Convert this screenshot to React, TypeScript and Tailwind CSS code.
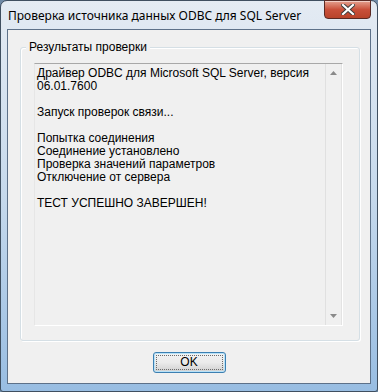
import React from 'react'

const lines = [
  'Драйвер ODBC для Microsoft SQL Server, версия',
  '06.01.7600',
  '',
  'Запуск проверок связи...',
  '',
  'Попытка соединения',
  'Соединение установлено',
  'Проверка значений параметров',
  'Отключение от сервера',
  '',
  'ТЕСТ УСПЕШНО ЗАВЕРШЕН!',
]

function CloseButton() {
  return (
    <button className="w-[47px] h-[19px] mt-[-1px] rounded-b-[4px] border border-[#5a2a24] bg-gradient-to-b from-[#e3a08f] via-[#c9503a] to-[#b8432a] flex items-center justify-center shadow-[inset_0_1px_0_rgba(255,255,255,0.5)]">
      <svg width="14" height="11" viewBox="0 0 14 11">
        <path
          d="M2 1 L12 10 M12 1 L2 10"
          stroke="#3b3b3b"
          strokeWidth="4"
          strokeLinecap="square"
        />
        <path
          d="M2 1 L12 10 M12 1 L2 10"
          stroke="#ffffff"
          strokeWidth="2.2"
          strokeLinecap="square"
        />
      </svg>
    </button>
  )
}

function Arrow({ up }: { up?: boolean }) {
  return (
    <svg width="7" height="4" viewBox="0 0 7 4">
      <path d={up ? 'M0 4 L3.5 0 L7 4 Z' : 'M0 0 L3.5 4 L7 0 Z'} fill="#8a8a8a" />
    </svg>
  )
}

export default function App() {
  return (
    <div className="w-[378px] h-[392px] bg-[#6f8aa6]">
      <div
        className="w-[378px] h-[392px] flex flex-col rounded-t-[7px] rounded-b-[3px] border border-[#3f4f60] bg-gradient-to-b from-[#e4ebf3] via-[#c6d9ec] to-[#98bde2]"
        style={{ fontFamily: '"Liberation Sans", Arial, sans-serif' }}
      >
        {/* title bar */}
        <div className="h-[28px] flex items-start justify-between pl-[7px] pr-[6px] shrink-0">
          <span
            className="mt-[7px] text-[12px] leading-[16px] text-black"
            style={{ fontFamily: '"Noto Sans", "Open Sans", sans-serif' }}
          >
            Проверка источника данных ODBC для SQL Server
          </span>
          <CloseButton />
        </div>

        {/* client area */}
        <div className="mx-[6px] mb-[7px] flex-1 border border-[#5d7189] bg-[#f0f0f0] flex flex-col text-[12px] text-black">
          {/* group box */}
          <div className="relative mt-[17px] ml-[12px] mr-[10px] h-[294px] rounded-[3px] border border-[#d5dfe5] shadow-[inset_1px_1px_0_#ffffff,1px_1px_0_#ffffff] pl-[13px] pr-[16px] pt-[15px] pb-[14px] flex flex-col">
            <span className="absolute left-[5px] top-[-8px] px-[3px] bg-[#f0f0f0] leading-[14px]">
              Результаты проверки
            </span>
            <div className="flex-1 flex border-t border-l border-t-[#a8a8a8] border-l-[#e6e6e6] border-r border-b border-r-[#ffffff] border-b-[#ffffff]">
              <div className="flex-1 pl-[2px] pt-[3px] leading-[13px] whitespace-pre">
                {lines.map((l, i) => (
                  <div key={i} className="h-[13px]">
                    {l}
                  </div>
                ))}
              </div>
              <div className="w-[17px] flex flex-col items-center justify-between border-l border-[#e0e0e0] border-r border-r-[#e3e3e3] bg-[#f0f0f0] pt-[7px] pb-[7px]">
                <Arrow up />
                <Arrow />
              </div>
            </div>
          </div>

          <div className="flex justify-center mt-[11px]">
            <button className="w-[73px] h-[21px] rounded-[3px] border border-[#3c7fb1] bg-gradient-to-b from-[#f2f2f2] via-[#ebebeb] to-[#cfcfcf] shadow-[inset_0_0_0_1px_#b8e2f8] p-[2px]">
              <div className="w-full h-full border border-dotted border-[#6b6b6b] flex items-center justify-center leading-[13px] text-[12px]">
                OK
              </div>
            </button>
          </div>
        </div>
      </div>
    </div>
  )
}
